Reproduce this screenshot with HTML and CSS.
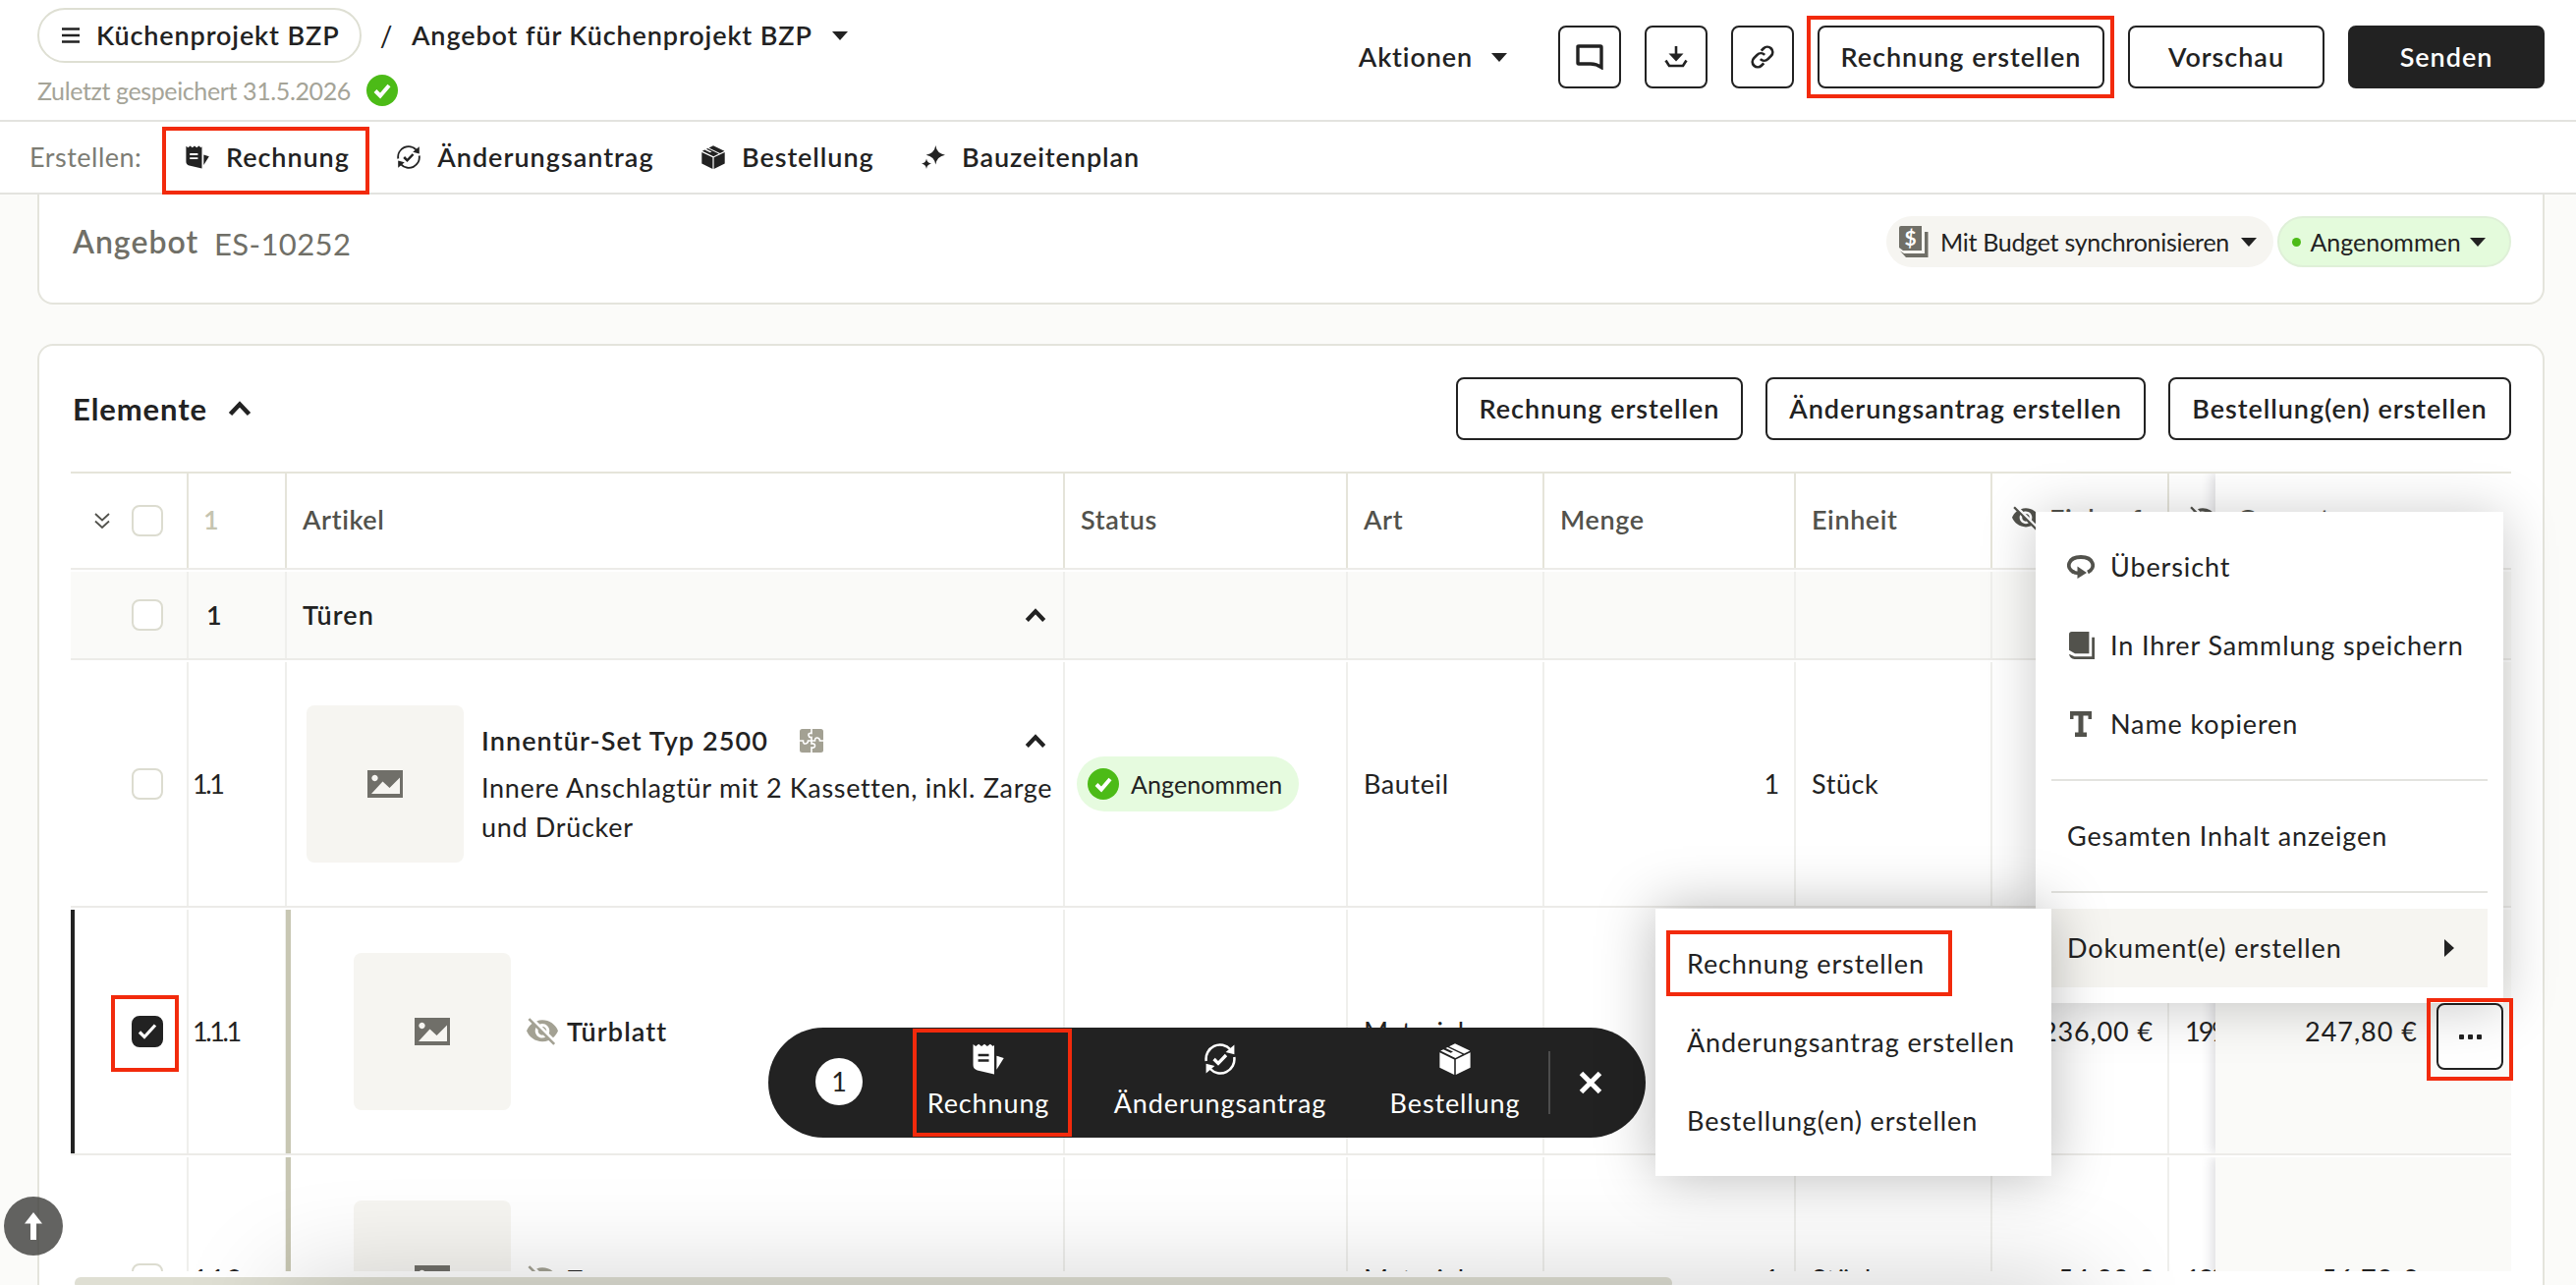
FILE: index.html
```html
<!DOCTYPE html>
<html lang="de">
<head>
<meta charset="utf-8">
<title>Angebot für Küchenprojekt BZP</title>
<link rel="stylesheet" href="styles.css">
</head>
<body>
<svg class="defs" aria-hidden="true">
  <symbol id="i-receipt" viewBox="0 0 24 24"><path fill-rule="evenodd" d="M.4.8 2.4 2.3 4.6.6 6.8 2.3 9 .6l2.2 1.7L13.400.6l2.200 1.700.9-1V23.600L3.600 20.600Q.4 19.600.4 16.500ZM4.200 8v1.900h8.200V8Zm0 4.200v1.900h8.200v-1.900Z"/><path d="M18.300 9.500 23.800 11.300 18.300 20Z"/></symbol>
  <symbol id="i-sync" viewBox="0 0 24 24"><g fill="none" stroke="currentColor" stroke-width="1.900"><path d="M1.300 13.500A10.700 10.700 0 0 1 19.800 4.700"/><path d="M22.700 10.500A10.700 10.700 0 0 1 4.200 19.300"/><path stroke-width="2.500" d="m7.200 12 3.300 3.300 6-6.300"/></g><path d="M22.800 1.200v7.200l-6.600-1.600ZM1.200 22.800v-7.200l6.600 1.600Z"/></symbol>
  <symbol id="i-box" viewBox="0 0 24 24"><path d="M12 .2 23.400 5.700 18.900 7.900 7.500 2.400ZM6.300 3 17.700 8.500 12.300 11.200.9 5.700 3.200 4.600 8.800 7.300 10.500 6.400 4.900 3.700ZM.3 7 11.400 12.300V24L.3 18.600ZM23.700 7 12.600 12.300V24L23.700 18.600Z"/></symbol>
  <symbol id="i-spark" viewBox="0 0 24 24"><path d="M14.300 0q1.200 8.300 9.700 9.700-8.500 1.400-9.700 9.900-1.200-8.500-9.700-9.900Q13.100 8.300 14.300 0ZM5 13.400q.7 4.400 5 5.200-4.300.8-5 5.400-.7-4.600-5-5.400 4.300-.8 5-5.200Z"/></symbol>
  <symbol id="i-check" viewBox="0 0 32 32"><circle cx="16" cy="16" r="16" fill="#4cbb17"/><path d="m9 16.500 5 5L23 11" fill="none" stroke="#fff" stroke-width="4"/></symbol>
  <symbol id="i-eyeoff" viewBox="1 3 22 19"><path d="M12 7c2.760 0 5 2.240 5 5 0 .65-.13 1.260-.36 1.830l2.920 2.920c1.510-1.260 2.700-2.890 3.430-4.750-1.730-4.390-6-7.500-11-7.500-1.400 0-2.740.25-3.980.7l2.160 2.160C10.740 7.130 11.350 7 12 7zM2 4.270l2.280 2.280.46.46C3.080 8.300 1.780 10.020 1 12c1.730 4.390 6 7.500 11 7.500 1.550 0 3.030-.3 4.380-.84l.42.42L19.730 22 21 20.730 3.270 3 2 4.270zM7.530 9.800l1.550 1.550c-.05.21-.08.43-.08.65 0 1.660 1.340 3 3 3 .22 0 .44-.03.65-.08l1.550 1.550c-.67.33-1.410.53-2.200.53-2.760 0-5-2.240-5-5 0-.79.2-1.530.53-2.200zm4.310-.78 3.150 3.150.02-.16c0-1.660-1.340-3-3-3l-.17.01z"/></symbol>
  <symbol id="i-image" viewBox="0 0 36 28"><path fill-rule="evenodd" d="M0 0h36v28H0ZM4 24H33V7.500L22.500 18 15.500 11.500ZM7.500 4.800a3.200 3.200 0 1 0 .01 0Z"/></symbol>
  <symbol id="i-up" viewBox="0 0 24 16"><path d="m2.500 13.500 9.500-10 9.500 10" fill="none" stroke="currentColor" stroke-width="4.600"/></symbol>
  <symbol id="i-caret" viewBox="0 0 16 9"><path d="M0 0h16L8 9Z"/></symbol>
  <symbol id="i-book" viewBox="0 0 28 30"><path d="M3 0H22V24H6.500L0 20V3Q0 0 3 0ZM25 6h3V30H6Q1 30 0 24.500L6 27H25Z"/></symbol>
</svg>

<div class="page">
  <header class="topbar">
    <div class="crumbs">
      <div class="crumb-row">
        <a class="project"><svg class="burger" viewBox="0 0 18 16"><path d="M0 1.500h18M0 8h18M0 14.500h18" stroke="currentColor" stroke-width="2.600"/></svg><span>Küchenprojekt BZP</span></a>
        <span class="slash">/</span>
        <span class="doc-name">Angebot für Küchenprojekt BZP</span>
        <svg class="caret"><use href="#i-caret"/></svg>
      </div>
      <div class="saved"><span>Zuletzt gespeichert 31.5.2026</span><svg class="ok"><use href="#i-check"/></svg></div>
    </div>
    <div class="top-actions">
      <span class="aktionen">Aktionen</span><svg class="caret"><use href="#i-caret"/></svg>
      <button class="btn square"><svg width="28" height="26" viewBox="0 0 28 26"><path d="M2 2.500Q2 2 3 2H25Q26 2 26 3V23.500Q21 20 15 20H3Q2 20 2 19Z" fill="none" stroke="currentColor" stroke-width="3.400"/></svg></button>
      <button class="btn square"><svg width="24" height="24" viewBox="0 0 24 24"><path d="M12 1v10" stroke="currentColor" stroke-width="2.600"/><path d="M4.500 8.500h15L12 16.500Z"/><path d="M1.500 15.500 5 21H19l3.500-5.500" fill="none" stroke="currentColor" stroke-width="2.600"/></svg></button>
      <button class="btn square"><svg width="26" height="26" viewBox="0 0 24 24"><path fill="none" stroke="currentColor" stroke-width="2.500" d="M10 14a5 5 0 0 0 7.070 0l3-3A5 5 0 0 0 13 3.930l-2.200 2.200M14 10a5 5 0 0 0-7.070 0l-3 3A5 5 0 0 0 11 20.070l2.200-2.200"/></svg></button>
      <button class="btn">Rechnung erstellen</button>
      <button class="btn wide">Vorschau</button>
      <button class="btn wide primary">Senden</button>
    </div>
  </header>

  <nav class="toolbar">
    <span class="label">Erstellen:</span>
    <a><svg><use href="#i-receipt"/></svg>Rechnung</a>
    <a><svg><use href="#i-sync"/></svg>Änderungsantrag</a>
    <a><svg><use href="#i-box"/></svg>Bestellung</a>
    <a><svg><use href="#i-spark"/></svg>Bauzeitenplan</a>
  </nav>

  <main>
    <section class="card head-card">
      <h1>Angebot</h1><span class="number">ES-10252</span>
      <div class="chips">
        <span class="chip"><svg class="budget" viewBox="0 0 30 32"><path d="M2 0H23V25H4L0 22V2Q0 0 2 0ZM26 6h3.500V32H7L1 25.500 5 28H26Z"/><text x="11.500" y="20" text-anchor="middle">$</text></svg><span class="sync">Mit Budget synchronisieren</span><svg class="caret"><use href="#i-caret"/></svg></span>
        <span class="chip green"><i></i>Angenommen<svg class="caret"><use href="#i-caret"/></svg></span>
      </div>
    </section>

    <section class="card items-card">
      <div class="items-head">
        <h2>Elemente</h2><svg class="up"><use href="#i-up"/></svg>
        <div class="items-actions">
          <button class="btn">Rechnung erstellen</button>
          <button class="btn">Änderungsantrag erstellen</button>
          <button class="btn">Bestellung(en) erstellen</button>
        </div>
      </div>

      <div class="table">
        <div class="row thead">
          <div class="c sel"><svg class="dbl" viewBox="0 0 16 16"><path d="m1 1 7 6.500L15 1M1 8.500 8 15l7-6.500" fill="none" stroke="currentColor" stroke-width="1.800"/></svg><span class="cb"></span></div>
          <div class="c num">1</div>
          <div class="c art">Artikel</div>
          <div class="c">Status</div><div class="c">Art</div><div class="c">Menge</div><div class="c">Einheit</div>
          <div class="c hid"><svg class="eye"><use href="#i-eyeoff"/></svg>Einkauf</div>
          <div class="c hid"><svg class="eye"><use href="#i-eyeoff"/></svg></div>
          <div class="c sticky">Gesamt</div>
        </div>
        <div class="row group">
          <div class="c sel"><span class="cb"></span></div>
          <div class="c num">1</div>
          <div class="c art"><b>Türen</b><svg class="up"><use href="#i-up"/></svg></div>
          <div class="c"></div><div class="c"></div><div class="c"></div><div class="c"></div><div class="c"></div><div class="c"></div>
          <div class="c sticky"></div>
        </div>
        <div class="row item">
          <div class="c sel"><span class="cb"></span></div>
          <div class="c num">1.1</div>
          <div class="c art">
            <div class="thumb"><svg><use href="#i-image"/></svg></div>
            <div class="desc">
              <div class="title"><b>Innentür-Set Typ 2500</b><svg class="puzzle" viewBox="0 0 24 24"><rect width="24" height="24" rx="2.500"/><path d="M12 0v4.500q-3.500-.5-3 2t3 2V15q3.500-.5 3.500 2t-3.500 2v5M0 12h3.500q0 3.500 2.500 3t2.500-3h7q0-3.500 2.500-3t2.500 3H24" fill="none" stroke="#fff" stroke-width="1.600"/></svg><svg class="up"><use href="#i-up"/></svg></div>
              <p>Innere Anschlagtür mit 2 Kassetten, inkl. Zarge<br>und Drücker</p>
            </div>
          </div>
          <div class="c status"><span class="badge"><svg class="ok"><use href="#i-check"/></svg>Angenommen</span></div>
          <div class="c">Bauteil</div><div class="c right">1</div><div class="c">Stück</div><div class="c"></div><div class="c"></div>
          <div class="c sticky"></div>
        </div>
        <div class="row item selected">
          <div class="c sel"><span class="cb on"><svg viewBox="0 0 20 20"><path d="m2 10.500 5 5L18 3.500" fill="none" stroke="#fff" stroke-width="3.200"/></svg></span></div>
          <div class="c num">1.1.1</div>
          <div class="c art child">
            <div class="thumb"><svg><use href="#i-image"/></svg></div>
            <svg class="eye"><use href="#i-eyeoff"/></svg><b>Türblatt</b>
          </div>
          <div class="c"></div><div class="c">Material</div><div class="c right">1</div><div class="c">Stück</div><div class="c right">236,00 €</div><div class="c vat">19%</div>
          <div class="c sticky">247,80 €<button class="more"><i></i><i></i><i></i></button></div>
        </div>
        <div class="row item">
          <div class="c sel"><span class="cb"></span></div>
          <div class="c num">1.1.2</div>
          <div class="c art child">
            <div class="thumb"><svg><use href="#i-image"/></svg></div>
            <svg class="eye"><use href="#i-eyeoff"/></svg><b>Zarge</b>
          </div>
          <div class="c"></div><div class="c">Material</div><div class="c right">1</div><div class="c">Stück</div><div class="c right">54,00 €</div><div class="c vat">19%</div>
          <div class="c sticky">56,70 €</div>
        </div>
      </div>
      <div class="scrollbar"></div>
    </section>
  </main>

  <div class="edge-shade"></div>
  <div class="to-top"><svg width="18" height="28" viewBox="0 0 18 28"><path d="M9 0 18 11.500H12V28H6V11.500H0Z"/></svg></div>

  <div class="bulk">
    <span class="count">1</span>
    <a class="b1"><svg><use href="#i-receipt"/></svg>Rechnung</a>
    <a class="b2"><svg><use href="#i-sync"/></svg>Änderungsantrag</a>
    <a class="b3"><svg><use href="#i-box"/></svg>Bestellung</a>
    <span class="rule"></span>
    <svg class="close" viewBox="0 0 24 24"><path d="m2.500 2.500 19 19m0-19-19 19" stroke="currentColor" stroke-width="5"/></svg>
  </div>

  <div class="menu main-menu">
    <a><svg width="28" height="24" viewBox="0 0 28 24"><path d="M7 17.500C-2 13 1 2 14 2S30 13 21 17.500" fill="none" stroke="currentColor" stroke-width="3.800"/><path d="M10.500 11.500 20 18l-9.500 6Z"/><path d="M5 16.500Q8 18.500 12 18.500" fill="none" stroke="currentColor" stroke-width="3.500"/></svg>Übersicht</a>
    <a><svg width="26" height="28"><use href="#i-book"/></svg>In Ihrer Sammlung speichern</a>
    <a><svg width="22" height="26" viewBox="0 0 22 26"><path d="M0 0H22V8H18.500V4.500H13.500V21.500H17V26H5V21.500H8.500V4.500H3.500V8H0Z"/></svg>Name kopieren</a>
    <hr>
    <a>Gesamten Inhalt anzeigen</a>
    <hr>
    <a class="active">Dokument(e) erstellen<svg class="next" viewBox="0 0 10 18"><path d="M0 0 10 9 0 18Z"/></svg></a>
  </div>
  <div class="menu sub-menu">
    <a>Rechnung erstellen</a>
    <a>Änderungsantrag erstellen</a>
    <a>Bestellung(en) erstellen</a>
  </div>

  <div class="mark m1"></div><div class="mark m2"></div><div class="mark m3"></div>
  <div class="mark m4"></div><div class="mark m5"></div><div class="mark m6"></div>
</div>
</body>
</html>
```

FILE: styles.css
```css
* { box-sizing: border-box; }
body { margin: 0; background: #fbfbf9; color: #222; font: 400 27px/40px Lato, "Open Sans", sans-serif; letter-spacing: .88px; overflow: hidden; }
svg { display: block; flex: none; fill: currentColor; }
.defs { position: absolute; width: 0; height: 0; }
.page { position: relative; width: 2622px; height: 1308px; overflow: hidden; display: flex; flex-direction: column; }
h1, h2, p { margin: 0; }
b { font-weight: 600; letter-spacing: 1.1px; }
.caret { width: 16px; height: 9px; }

.topbar { height: 124px; flex: none; background: #fff; border-bottom: 2px solid #e3e3df; padding: 8px 32px 0 38px; display: flex; justify-content: space-between; font-weight: 600; }
.crumb-row { display: flex; align-items: center; height: 56px; }
.project { width: 330px; height: 56px; border: 2px solid #dedfd3; border-radius: 28px; display: flex; align-items: center; padding-left: 23px; gap: 17px; white-space: nowrap; }
.burger { width: 18px; height: 16px; }
.slash { width: 51px; text-align: center; font-weight: 400; font-size: 28px; }
.doc-name { width: 428px; white-space: nowrap; }
.saved { display: flex; align-items: center; height: 40px; margin-top: 8px; color: #a5a498; font-weight: 400; font-size: 25px; letter-spacing: -.38px; }
.saved span { width: 335px; white-space: nowrap; }
.ok { width: 32px; height: 32px; }
.top-actions { display: flex; align-items: center; height: 64px; margin-top: 18px; gap: 24px; }
.aktionen { margin-right: -5px; }
.top-actions .caret { margin-right: 28px; }
.btn { height: 64px; border: 2px solid #222; border-radius: 8px; background: #fff; color: #222; font: inherit; letter-spacing: .95px; font-weight: 600; padding: 0 10px; display: flex; align-items: center; justify-content: center; white-space: nowrap; }
.btn.square { width: 64px; padding: 0; }
.top-actions .btn:nth-of-type(4) { width: 292px; }
.btn.wide { width: 200px; }
.btn.primary { background: #222; color: #fff; }

.toolbar { height: 74px; flex: none; background: #fff; border-bottom: 2px solid #e3e3df; display: flex; align-items: center; padding-left: 30px; font-weight: 600; z-index: 1; letter-spacing: .93px; }
.toolbar .label { width: 159px; color: #7c7c74; font-weight: 400; letter-spacing: .5px; }
.toolbar a { display: flex; align-items: center; gap: 17px; margin-right: 48.500px; }
.toolbar a:nth-of-type(2) { letter-spacing: 1px; }
.toolbar svg { width: 24px; height: 24px; }

main { flex: 1; padding: 0 32px 0 38px; display: flex; flex-direction: column; min-height: 0; }
.card { background: #fff; border: 2px solid #e4e4dc; border-radius: 16px; }
.head-card { height: 112px; flex: none; border-top: 0; border-radius: 0 0 16px 16px; padding: 0 32px 14px 34px; display: flex; align-items: center; color: #706f67; }
h1 { font-size: 32px; font-weight: 600; width: 144px; letter-spacing: 1px; }
.number { font-size: 31px; padding-top: 3px; letter-spacing: .4px; }
.chips { margin-left: auto; display: flex; gap: 4px; color: #222; font-size: 25px; letter-spacing: 0; }
.chip { height: 52px; width: 394px; border-radius: 26px; background: #f6f5f1; display: flex; align-items: center; justify-content: space-between; padding: 0 17px 0 13px; white-space: nowrap; }
.sync { letter-spacing: -.28px; }
.chip.green { width: 238px; background: #e4fbdc; border: 2px solid #dff0d8; padding: 0 24px 0 13px; }
.chip i { width: 9px; height: 9px; border-radius: 50%; background: #4cbb17; }
.budget { width: 30px; height: 32px; fill: #706f67; }
.budget text { fill: #fff; font: 700 21px Lato, sans-serif; }

.items-card { margin-top: 40px; flex: 1; border-bottom: 0; border-radius: 16px 16px 0 0; padding: 0 32px; display: flex; flex-direction: column; min-height: 0; }
.items-head { height: 128px; padding-left: 2px; display: flex; align-items: center; flex: none; }
h2 { font-size: 31px; font-weight: 700; width: 158px; letter-spacing: .9px; }
.up { width: 24px; height: 16px; }
.items-actions { margin-left: auto; display: flex; gap: 23px; }
.items-actions .btn:nth-child(1) { width: 292px; }
.items-actions .btn:nth-child(2) { width: 387px; }
.items-actions .btn:nth-child(3) { width: 349px; }

.table { height: 814px; overflow: hidden; border-top: 2px solid #e5e4da; flex: none; }
.row { display: grid; grid-template-columns: 120px 100px 792px 288px 200px 256px 200px 180px 47px 301px; border-bottom: 2px solid #ecebe8; margin-bottom: 2px; }
.c { display: flex; align-items: center; padding-left: 16px; border-right: 2px solid #efefec; min-width: 0; white-space: nowrap; letter-spacing: .6px; }
.thead { height: 98px; font-weight: 600; color: #52524c; }
.thead .c { border-color: #e5e4da; padding-bottom: 2px; }
.thead .c.hid, .thead .c.sticky { padding-bottom: 5px; }
.group { height: 90px; background: #fafaf8; }
.item { height: 250px; }
.c.sel { justify-content: flex-end; padding: 0 24px 0 0; gap: 22px; }
.cb { width: 32px; height: 32px; border: 2px solid #dcdcd0; border-radius: 8px; background: #fff; }
.cb.on { background: #222; border-color: #222; padding: 4px; }
.dbl { width: 16px; height: 16px; }
.c.num { padding-left: 4px; letter-spacing: -2.4px; }
.thead .num { padding-left: 15px; color: #c5c4b0; }
.group .num { padding-left: 18px; font-weight: 600; }
.c.right { justify-content: flex-end; padding-right: 14px; letter-spacing: .88px; }
.c.vat { padding-left: 16px; overflow: hidden; border-right: 0; letter-spacing: -2px; }
.c.hid { gap: 10px; padding-left: 20px; overflow: hidden; }
.hid:nth-child(9) { border-right: 0; }
.eye { width: 32px; height: 28px; color: #a3a193; }
.thead .eye { width: 28px; height: 25px; color: #52524c; }
.art .up { margin-left: auto; width: 22px; height: 15px; }
.group .art { padding-right: 17px; }
.item .art { padding-left: 20px; }
.item .art.child { padding-left: 64px; border-left: 5px solid #c8c7b3; margin-left: -1px; }
.thumb { width: 160px; height: 160px; border-radius: 8px; background: #f6f5f1; display: flex; align-items: center; justify-content: center; flex: none; color: #706f69; }
.thumb svg { width: 36px; height: 28px; }
.child .eye { margin: 0 9px 0 16px; }
.desc { margin-left: 18px; flex: 1; padding-bottom: 4px; letter-spacing: .68px; }
.title { display: flex; align-items: center; height: 48px; margin-bottom: 4px; padding-right: 17px; }
.title b { width: 324px; }
.puzzle { width: 24px; height: 24px; color: #a3a193; }
.c.status { padding-left: 12px; letter-spacing: .1px; }
.badge { width: 226px; height: 56px; border-radius: 28px; background: #e6fbdf; display: flex; align-items: center; gap: 12px; padding-left: 11px; font-size: 25px; }
.c.sticky { border-right: 0; padding-left: 22px; background: #fff; box-shadow: -4px 0 10px rgba(60, 60, 80, .16); clip-path: inset(0 0 0 -14px); }
.group .sticky { background: #fafaf8; }
.item .sticky { background: #fafaf8; justify-content: flex-end; padding-right: 95px; position: relative; letter-spacing: 1px; }
.selected { position: relative; }
.selected .sel { box-shadow: inset 4px 0 #222; }
.more { position: absolute; right: 8px; top: 95px; width: 68px; height: 68px; border: 2px solid #222; border-radius: 8px; background: #fff; display: flex; align-items: center; justify-content: center; gap: 4px; padding: 0; }
.more i { width: 5px; height: 5px; background: #222; border-radius: 1px; }
.scrollbar { width: 1626px; height: 12px; margin: 6px 0 0 4px; background: #dfdfd3; border-radius: 6px; flex: none; }

.edge-shade { position: absolute; left: 290px; top: 1310px; width: 1830px; height: 80px; box-shadow: 0 0 110px rgba(0, 0, 0, .22); }
.to-top { position: absolute; left: 4px; top: 1218px; width: 60px; height: 60px; border-radius: 50%; background: rgba(60, 60, 57, .8); color: #fff; display: flex; align-items: center; justify-content: center; }

.bulk { position: absolute; left: 782px; top: 1046px; width: 893px; height: 112px; border-radius: 56px; background: #222; color: #fff; display: flex; align-items: center; padding-left: 48px; }
.count { width: 48px; height: 48px; border-radius: 50%; background: #fff; color: #222; text-align: center; line-height: 48px; margin-top: -3px; letter-spacing: 0; }
.bulk a { display: flex; flex-direction: column; align-items: center; line-height: 36px; gap: 11px; margin-top: -2px; }
.bulk a svg { width: 32px; height: 32px; }
.b1 { width: 160px; margin-left: 48px; }
.b2 { width: 240px; margin-left: 36px; }
.b3 { width: 150px; margin-left: 44px; }
.rule { width: 2px; height: 64px; background: #4c4c4c; margin-left: 20px; }
.bulk .close { width: 24px; height: 24px; margin-left: 29px; }

.menu { position: absolute; background: #fff; padding: 16px; box-shadow: 0 0 56px rgba(0, 0, 0, .28); white-space: nowrap; }
.menu a { display: flex; align-items: center; height: 80px; padding: 0 16px; }
.menu svg { color: #52524c; }
.menu hr { margin: 16px 0; border: 0; height: 2px; background: #e3e3df; }
.main-menu { left: 2072px; top: 521px; width: 476px; height: 500px; box-shadow: 0 4px 52px rgba(0, 0, 0, .22); }
.main-menu a:nth-child(1) { gap: 16px; }
.main-menu a:nth-child(2) { gap: 16px; padding-left: 18px; }
.main-menu a:nth-child(3) { gap: 19px; padding-left: 19px; }
.menu .active { background: #f6f5f1; justify-content: space-between; padding-right: 34px; }
.menu .next { width: 10px; height: 18px; color: #222; }
.sub-menu { left: 1685px; top: 925px; width: 403px; height: 272px; }

.mark { position: absolute; border: 4px solid #f22a0c; }
.m1 { left: 1839px; top: 16px; width: 313px; height: 84px; }
.m2 { left: 165px; top: 129px; width: 211px; height: 69px; z-index: 2; }
.m3 { left: 113px; top: 1013px; width: 69px; height: 78px; }
.m4 { left: 929px; top: 1047px; width: 162px; height: 110px; }
.m5 { left: 1696px; top: 947px; width: 291px; height: 67px; }
.m6 { left: 2470px; top: 1016px; width: 88px; height: 84px; }
```
